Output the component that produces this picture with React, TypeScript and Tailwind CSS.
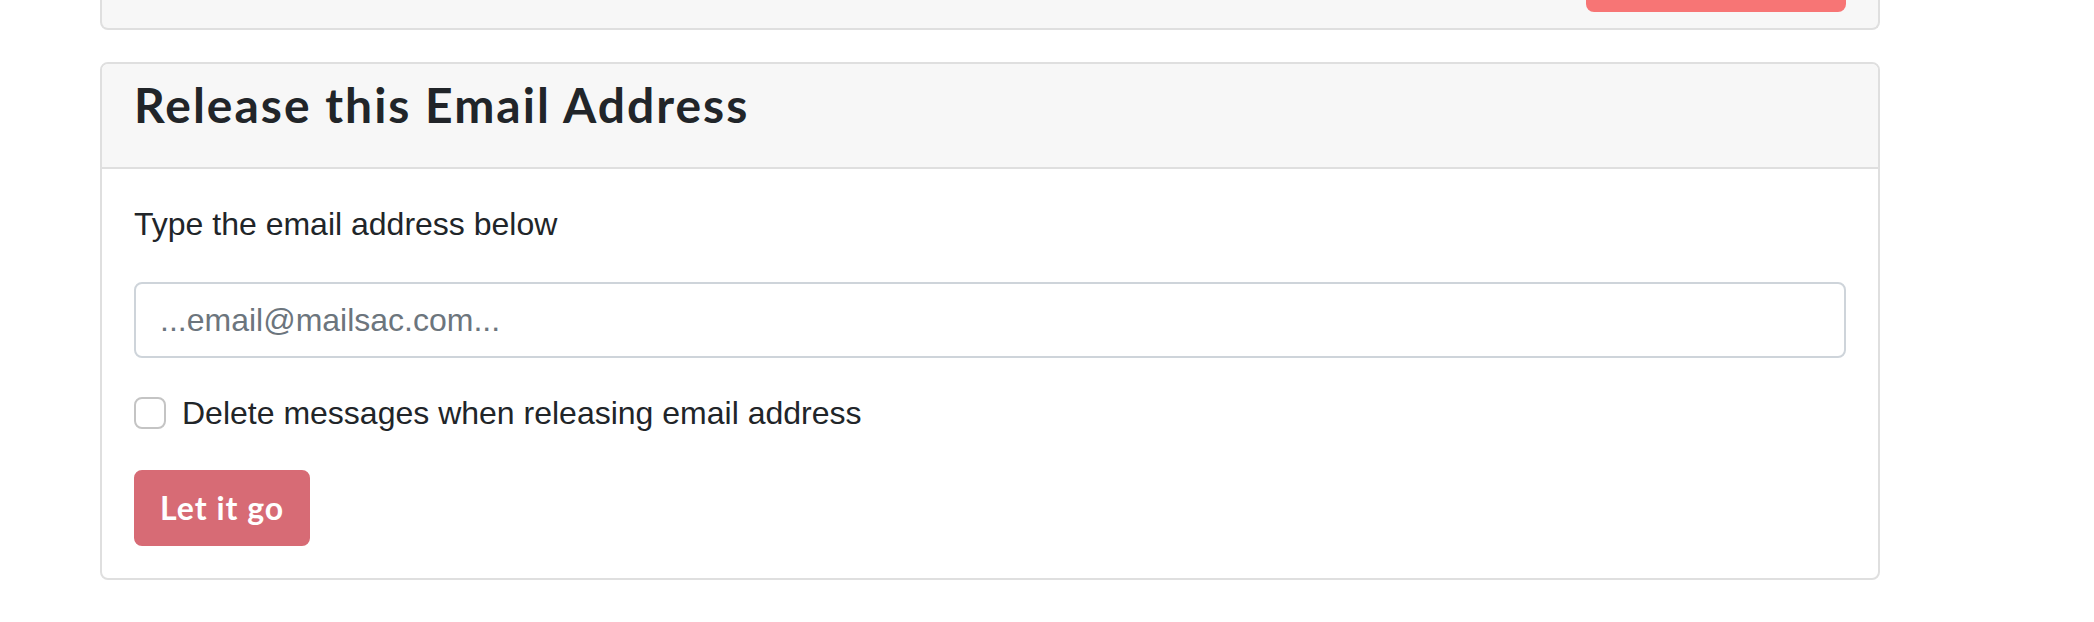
import { useState } from "react";

const heading = "font-['Lato','Noto_Sans',sans-serif] font-bold";
const body = "font-['Liberation_Sans',Arial,sans-serif]";

function PreviousCardFooter() {
  return (
    <div className="flex h-[30px] justify-end rounded-b-[8px] border-x-2 border-b-2 border-[#dfdfdf] bg-[#f7f7f7] pr-[32px]">
      <div className="h-[12px] w-[260px] rounded-b-[8px] bg-[#f77575]" />
    </div>
  );
}

export default function App() {
  const [email, setEmail] = useState("");
  const [purge, setPurge] = useState(false);

  return (
    <div className="min-h-[622px] bg-white pl-[100px] pr-[214px] text-[#212529]">
      <PreviousCardFooter />

      <section className="mt-[32px] overflow-hidden rounded-[8px] border-2 border-[#dfdfdf] bg-white">
        <div className="border-b-2 border-[#dfdfdf] bg-[#f7f7f7] px-[32px] pb-[33px] pt-[12px]">
          <h4 className={`${heading} text-[48px] leading-[58px] tracking-[2px]`}>
            Release this Email Address
          </h4>
        </div>

        <div className={`${body} px-[32px] pb-[32px] pt-[31px] text-[32px] leading-[48px]`}>
          <p className="mb-[34px]">Type the email address below</p>

          <input
            type="text"
            value={email}
            onChange={(e) => setEmail(e.target.value)}
            placeholder="...email@mailsac.com..."
            className="block h-[76px] w-full rounded-[8px] border-2 border-[#ced4da] bg-white px-[24px] text-[32px] text-[#495057] outline-none placeholder:text-[#6c757d]"
          />

          <label className="mt-[31px] flex items-center gap-[16px]">
            <input
              type="checkbox"
              checked={purge}
              onChange={(e) => setPurge(e.target.checked)}
              className="h-[32px] w-[32px] shrink-0 appearance-none rounded-[8px] border-2 border-[#c4c4c4] bg-white"
            />
            <span>Delete messages when releasing email address</span>
          </label>

          <button
            type="button"
            className={`${heading} mt-[33px] block h-[76px] rounded-[8px] border-2 border-[#d76b75] bg-[#d76b75] px-[24px] text-[32px] leading-[48px] tracking-[1px] text-white`}
          >
            Let it go
          </button>
        </div>
      </section>
    </div>
  );
}
